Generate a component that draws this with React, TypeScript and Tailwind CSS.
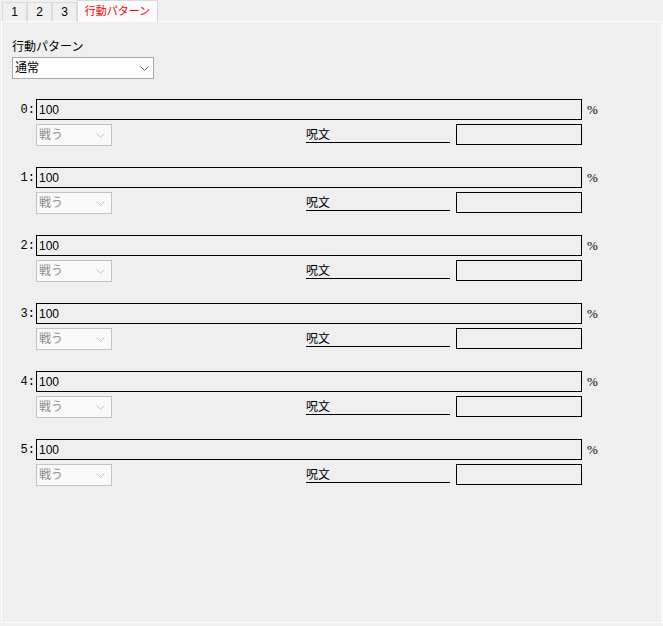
const FONT = "font-['Liberation_Sans','Noto_Sans_CJK_JP',sans-serif]";

const ROWS = [0, 1, 2, 3, 4, 5];
const TABS = ['1', '2', '3'];

const Chevron = ({ color }: { color: string }) => (
  <svg width="9" height="5" viewBox="0 0 9 5" className="shrink-0">
    <polyline points="0.5,0.5 4.5,4.5 8.5,0.5" fill="none" stroke={color} strokeWidth="1" />
  </svg>
);

const PatternRow = ({ index }: { index: number }) => (
  <div className="flex flex-col gap-[4px] pl-[10px]">
    <div className="flex h-[21px] items-center">
      <span className="w-[24px] pr-[1px] text-right font-['Liberation_Mono',monospace] text-[12px] leading-none text-black">
        {index}:
      </span>
      <div className="flex h-[21px] w-[546px] items-center border border-black bg-[#efefef] pl-[2px] text-[12px] text-black">
        100
      </div>
      <span className="ml-[5px] font-['Liberation_Serif',serif] text-[13px] leading-none text-black">%</span>
    </div>

    <div className="flex h-[22px] items-start pl-[24px]">
      <div className="flex h-[22px] w-[76px] items-center justify-between border border-[#c3c3c3] bg-[#f9f9f9] pl-[2px] pr-[6px] text-[12px] text-[#8d8d8d]">
        <span>戦う</span>
        <Chevron color="#c4c4c4" />
      </div>
      <div className="ml-[194px] flex h-[19px] w-[144px] items-end border-b border-black text-[12px] leading-[13px] text-black">
        呪文
      </div>
      <div className="ml-[6px] h-[21px] w-[126px] border border-black bg-[#efefef]" />
    </div>
  </div>
);

export default function App() {
  return (
    <div className={`${FONT} flex h-[626px] w-[663px] flex-col bg-[#f0f0f0]`}>
      {/* tab strip */}
      <div className="relative z-10 flex h-[21px] items-start pl-[2px]">
        {TABS.map(tab => (
          <div
            key={tab}
            className="mt-[2px] flex h-[19px] w-[25px] items-center justify-center border border-b-0 border-[#dadada] bg-[#f0f0f0] text-[12px] text-black"
          >
            {tab}
          </div>
        ))}
        <div className="flex h-[22px] w-[81px] items-center justify-center border border-b-0 border-[#d9d9d9] bg-[#fbfbfb] text-[11px] text-[#ff0000]">
          行動パターン
        </div>
      </div>

      {/* panel */}
      <div className="mx-[1px] h-[602px] border border-[#fdfdfd] bg-[#efefef] pt-[17px]">
        <div className="pl-[10px]">
          <div className="h-[16px] text-[12px] leading-[16px] text-black">行動パターン</div>
          <div className="mt-[2px] flex h-[22px] w-[142px] items-center justify-between border border-[#a9a9a9] bg-white pl-[2px] pr-[4px] text-[12px] text-black">
            <span>通常</span>
            <Chevron color="#606060" />
          </div>
        </div>

        <div className="mt-[20px] flex flex-col gap-[21px]">
          {ROWS.map(i => (
            <PatternRow key={i} index={i} />
          ))}
        </div>
      </div>
    </div>
  );
}
